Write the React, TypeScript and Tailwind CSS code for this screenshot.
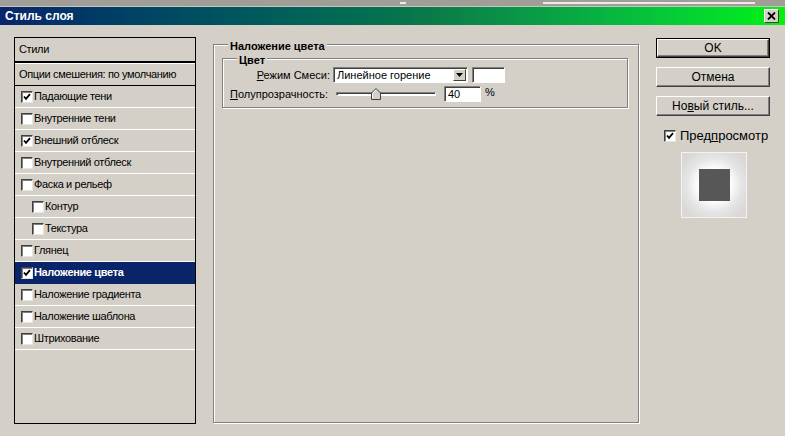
import React from "react";

const styles = [
  { id: "s1", label: "Падающие тени", checked: true, indent: false },
  { id: "s2", label: "Внутренние тени", checked: false, indent: false },
  { id: "s3", label: "Внешний отблеск", checked: true, indent: false },
  { id: "s4", label: "Внутренний отблеск", checked: false, indent: false },
  { id: "s5", label: "Фаска и рельеф", checked: false, indent: false },
  { id: "s6", label: "Контур", checked: false, indent: true },
  { id: "s7", label: "Текстура", checked: false, indent: true },
  { id: "s8", label: "Глянец", checked: false, indent: false },
  { id: "s9", label: "Наложение цвета", checked: true, indent: false, active: true },
  { id: "s10", label: "Наложение градиента", checked: false, indent: false },
  { id: "s11", label: "Наложение шаблона", checked: false, indent: false },
  { id: "s12", label: "Штрихование", checked: false, indent: false },
];

const CheckBox: React.FC<{ checked: boolean }> = ({ checked }) => (
  <span className="flex items-center justify-center w-[12px] h-[12px] shrink-0 bg-white border border-t-[#404040] border-l-[#404040] border-b-[#e8e6e1] border-r-[#e8e6e1] shadow-[inset_1px_1px_0_#808080]">
    {checked && (
      <svg width="8" height="8" viewBox="0 0 8 8">
        <polyline points="1,3.5 3,5.8 7,1.2" fill="none" stroke="#000" strokeWidth="1.8" />
      </svg>
    )}
  </span>
);

const Button: React.FC<{ children: React.ReactNode; primary?: boolean }> = ({ children, primary }) => (
  <div className={`w-[114px] h-[20px] ${primary ? "border border-black" : ""}`}>
    <div className="w-full h-full flex items-center justify-center bg-[#d4d0c8] border border-t-white border-l-white border-r-[#404040] border-b-[#404040] shadow-[inset_-1px_-1px_0_#808080] text-[12px]">
      {children}
    </div>
  </div>
);

export default function App() {
  return (
    <div className="w-[785px] h-[436px] overflow-hidden flex flex-col bg-[#d4d0c8] text-black text-[11px] font-['Liberation_Sans',Arial,sans-serif]">
      {/* window behind */}
      <div className="h-[7px] flex bg-[#a19d97] border-b border-[#c9c5be]">
        <div className="ml-[400px] mt-[2px] w-[6px] h-[2px] bg-white/80" />
        <div className="ml-[137px] mt-[2px] w-[212px] h-[2px] bg-white/80" />
      </div>

      {/* title bar */}
      <div className="h-[18px] flex items-center justify-between pl-[5px] pr-[6px] bg-linear-to-r from-[#0a246a] via-[#0b7a48] via-55% to-[#00f400]">
        <span className="text-white font-bold text-[12px]">Стиль слоя</span>
        <div className="w-[15px] h-[14px] flex items-center justify-center bg-[#d4d0c8] border border-t-white border-l-white border-r-[#404040] border-b-[#404040]">
          <svg width="9" height="8" viewBox="0 0 9 8">
            <path d="M1 0.5 L8 7.5 M8 0.5 L1 7.5" stroke="#000" strokeWidth="1.8" />
          </svg>
        </div>
      </div>

      <div className="flex flex-1 pt-[12px]">
        {/* styles list */}
        <div className="ml-[14px] w-[182px] h-[387px] border border-black flex flex-col tracking-[-0.35px]">
          <div className="h-[24px] flex items-center pl-[4px] border-b border-black">Стили</div>
          <div className="h-[24px] flex items-center pl-[4px] border-t border-black border-b shadow-[inset_0_1px_0_#fff]">
            Опции смешения: по умолчанию
          </div>
          {styles.map((s) => (
            <div
              key={s.id}
              className={`h-[22px] flex items-center gap-[1px] border-b ${
                s.active ? "bg-[#0a246a] text-white font-bold border-[#0a246a]" : "border-white"
              } ${s.indent ? "pl-[17px]" : "pl-[6px]"}`}
            >
              <CheckBox checked={s.checked} />
              <span>{s.label}</span>
            </div>
          ))}
        </div>

        {/* settings group */}
        <div className="ml-[17px] mt-[7px] w-[426px] h-[379px] relative border border-[#808080] shadow-[1px_1px_0_#fff,inset_1px_1px_0_#fff] pt-[13px] px-[8px]">
          <span className="absolute -top-[7px] left-[14px] px-[2px] bg-[#d4d0c8] font-bold">Наложение цвета</span>

          <div className="relative w-[406px] h-[50px] border border-[#808080] shadow-[1px_1px_0_#fff,inset_1px_1px_0_#fff] pt-[8px] pl-[7px]">
            <span className="absolute -top-[7px] left-[14px] px-[2px] bg-[#d4d0c8] font-bold">Цвет</span>

            <div className="flex items-center h-[16px]">
              <span className="w-[100px] text-right">
                <span className="underline">Р</span>ежим Смеси:
              </span>
              <div className="ml-[3px] w-[135px] h-[16px] flex items-center bg-white border border-t-[#808080] border-l-[#808080] border-b-white border-r-white shadow-[inset_1px_1px_0_#404040]">
                <span className="flex-1 pl-[3px]">Линейное горение</span>
                <div className="w-[13px] h-[12px] mr-[1px] flex items-center justify-center bg-[#d4d0c8] border border-t-white border-l-white border-r-[#404040] border-b-[#404040]">
                  <svg width="7" height="4" viewBox="0 0 7 4">
                    <path d="M0 0 H7 L3.5 4 Z" fill="#000" />
                  </svg>
                </div>
              </div>
              <div className="ml-[4px] w-[33px] h-[16px] bg-white border border-t-[#808080] border-l-[#808080] border-b-white border-r-white shadow-[inset_1px_1px_0_#404040]" />
            </div>

            <div className="flex items-center h-[16px] mt-[3px]">
              <span className="w-[100px]">
                <span className="underline">П</span>олупрозрачность:
              </span>
              <div className="ml-[6px] w-[100px] h-[12px] flex items-center relative">
                <div className="w-full h-[4px] bg-white border border-t-[#808080] border-l-[#808080] border-b-white border-r-white shadow-[inset_1px_1px_0_#404040]" />
                <svg className="absolute left-[35px] top-0" width="10" height="12" viewBox="0 0 10 12">
                  <path d="M0.5 11.5 V5 L5 0.5 L9.5 5 V11.5 Z" fill="#d4d0c8" stroke="#404040" />
                  <path d="M1.5 10.5 V5.4 L5 1.9" fill="none" stroke="#fff" />
                </svg>
              </div>
              <div className="ml-[8px] w-[37px] h-[16px] flex items-center pl-[3px] bg-white border border-t-[#808080] border-l-[#808080] border-b-white border-r-white shadow-[inset_1px_1px_0_#404040]">
                40
              </div>
              <span className="ml-[4px] -mt-[3px]">%</span>
            </div>
          </div>
        </div>

        {/* buttons */}
        <div className="ml-[17px] pt-[1px] flex flex-col">
          <Button primary>OK</Button>
          <div className="mt-[9px]">
            <Button>Отмена</Button>
          </div>
          <div className="mt-[9px]">
            <Button>
              <span>
                Но<span className="underline">в</span>ый стиль...
              </span>
            </Button>
          </div>
          <div className="mt-[10px] ml-[8px] flex items-center gap-[4px] text-[13px]">
            <CheckBox checked />
            <span>
              Пред<span className="underline">п</span>росмотр
            </span>
          </div>
          <div className="mt-[6px] ml-[25px] w-[66px] h-[66px] flex items-center justify-center border border-[#f4f3f0] bg-[radial-gradient(circle,#ffffff_35%,#e6e5e6_60%,#d9d8d6_85%)]">
            <div className="w-[31px] h-[32px] bg-[#575757]" />
          </div>
        </div>
      </div>
    </div>
  );
}
